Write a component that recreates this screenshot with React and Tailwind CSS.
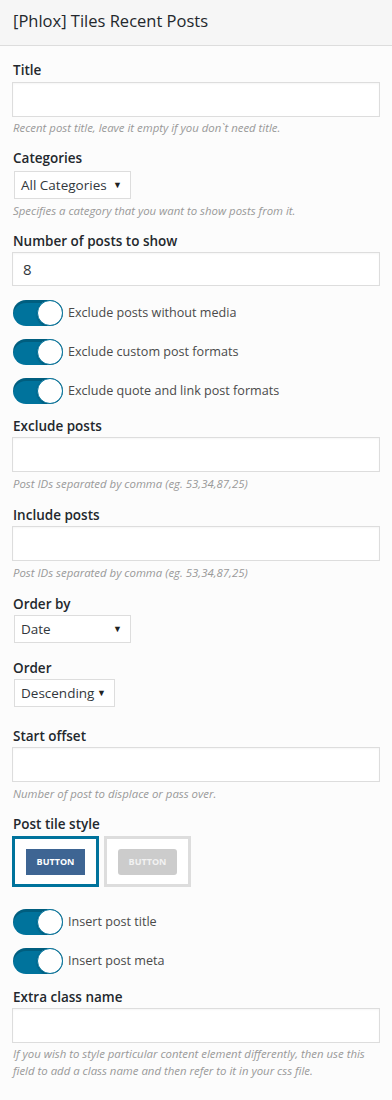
import React from "react";

const font = { fontFamily: '"Open Sans", "Noto Sans", sans-serif' };

function Label({ children, className = "" }) {
  return (
    <div className={`text-[13.5px] leading-[18px] font-semibold text-[#23282d] ${className}`}>
      {children}
    </div>
  );
}

function Help({ children, className = "" }) {
  return (
    <div className={`text-[11.4px] leading-[17px] italic text-[#999] ${className}`}>
      {children}
    </div>
  );
}

function TextInput({ value = "", className = "" }) {
  return (
    <div
      className={`h-[35px] border border-[#ddd] bg-white shadow-[inset_0_1px_2px_rgba(0,0,0,0.04)] px-[10px] flex items-center text-[15px] text-[#32373c] ${className}`}
    >
      {value}
    </div>
  );
}

function Select({ value, width, className = "" }) {
  return (
    <div
      className={`h-[28px] border border-[#ddd] bg-white flex items-center justify-between pl-[6px] pr-[8px] text-[13.5px] text-[#32373c] ${width} ${className}`}
    >
      <span>{value}</span>
      <span className="text-[9px] text-[#222]">▼</span>
    </div>
  );
}

function Toggle({ label, className = "" }) {
  return (
    <div className={`flex items-center h-[26px] ${className}`}>
      <div className="relative w-[50px] h-[26px] rounded-full bg-[#00739c] overflow-hidden shadow-[inset_0_3px_0_rgba(0,0,0,0.18)]">
        <div className="absolute right-0 top-0 w-[26px] h-[26px] rounded-full bg-white border border-[#00739c] shadow-[0_1px_2px_rgba(0,0,0,0.25)]" />
      </div>
      <span className="ml-[5px] text-[12.6px] text-[#4a4a4a]">{label}</span>
    </div>
  );
}

export default function App() {
  return (
    <div className="w-[392px] min-h-[1100px] bg-[#fcfcfc]" style={font}>
      <div className="h-[46px] bg-[#f6f6f6] border-b border-[#ddd] flex items-center px-[13px]">
        <h1 className="text-[16.5px] font-medium text-[#23282d] -mt-[3px]">[Phlox] Tiles Recent Posts</h1>
      </div>

      <div className="px-[12px] pb-[20px]">
        <Label className="mt-[15px] pl-[1px]">Title</Label>
        <TextInput className="mt-[3px]" />
        <Help className="mt-[2px] pl-[1px]">Recent post title, leave it empty if you don`t need title.</Help>

        <Label className="mt-[13px] pl-[1px]">Categories</Label>
        <Select className="mt-[4px] ml-[2px]" width="w-[117px]" value="All Categories" />
        <Help className="mt-[3px] pl-[1px]">Specifies a category that you want to show posts from it.</Help>

        <Label className="mt-[13px] pl-[1px]">Number of posts to show</Label>
        <TextInput className="mt-[2px] !h-[34px]" value="8" />

        <Toggle className="mt-[14px] pl-[1px]" label="Exclude posts without media" />
        <Toggle className="mt-[13px] pl-[1px]" label="Exclude custom post formats" />
        <Toggle className="mt-[13px] pl-[1px]" label="Exclude quote and link post formats" />

        <Label className="mt-[13px] pl-[1px]">Exclude posts</Label>
        <TextInput className="mt-[2px]" />
        <Help className="mt-[3px] pl-[1px]">Post IDs separated by comma (eg. 53,34,87,25)</Help>

        <Label className="mt-[14px] pl-[1px]">Include posts</Label>
        <TextInput className="mt-[2px]" />
        <Help className="mt-[3px] pl-[1px]">Post IDs separated by comma (eg. 53,34,87,25)</Help>

        <Label className="mt-[14px] pl-[1px]">Order by</Label>
        <Select className="mt-[2px] ml-[2px]" width="w-[117px]" value="Date" />

        <Label className="mt-[16px] pl-[1px]">Order</Label>
        <Select className="mt-[2px] ml-[2px]" width="w-[101px]" value="Descending" />

        <Label className="mt-[20px] pl-[1px]">Start offset</Label>
        <TextInput className="mt-[2px]" />
        <Help className="mt-[3px] pl-[1px]">Number of post to displace or pass over.</Help>

        <Label className="mt-[13px] pl-[1px]">Post tile style</Label>
        <div className="mt-[3px] flex gap-[5px]">
          <div className="w-[87px] h-[51px] border-[3px] border-[#00739c] bg-white flex items-center justify-center">
            <div className="w-[59px] h-[26px] bg-[#3e6593] flex items-center justify-center text-[9px] font-bold text-white">
              BUTTON
            </div>
          </div>
          <div className="w-[87px] h-[51px] border-[3px] border-[#ddd] bg-white flex items-center justify-center">
            <div className="w-[59px] h-[26px] rounded-[3px] bg-[#ccc] flex items-center justify-center text-[9px] font-bold text-[#f2f2f2]">
              BUTTON
            </div>
          </div>
        </div>

        <Toggle className="mt-[22px] pl-[1px]" label="Insert post title" />
        <Toggle className="mt-[13px] pl-[1px]" label="Insert post meta" />

        <Label className="mt-[14px] pl-[1px]">Extra class name</Label>
        <TextInput className="mt-[2px]" />
        <Help className="mt-[2px] pl-[1px]">
          If you wish to style particular content element differently, then use this field to add a class name and then refer to it in your css file.
        </Help>
      </div>
    </div>
  );
}
